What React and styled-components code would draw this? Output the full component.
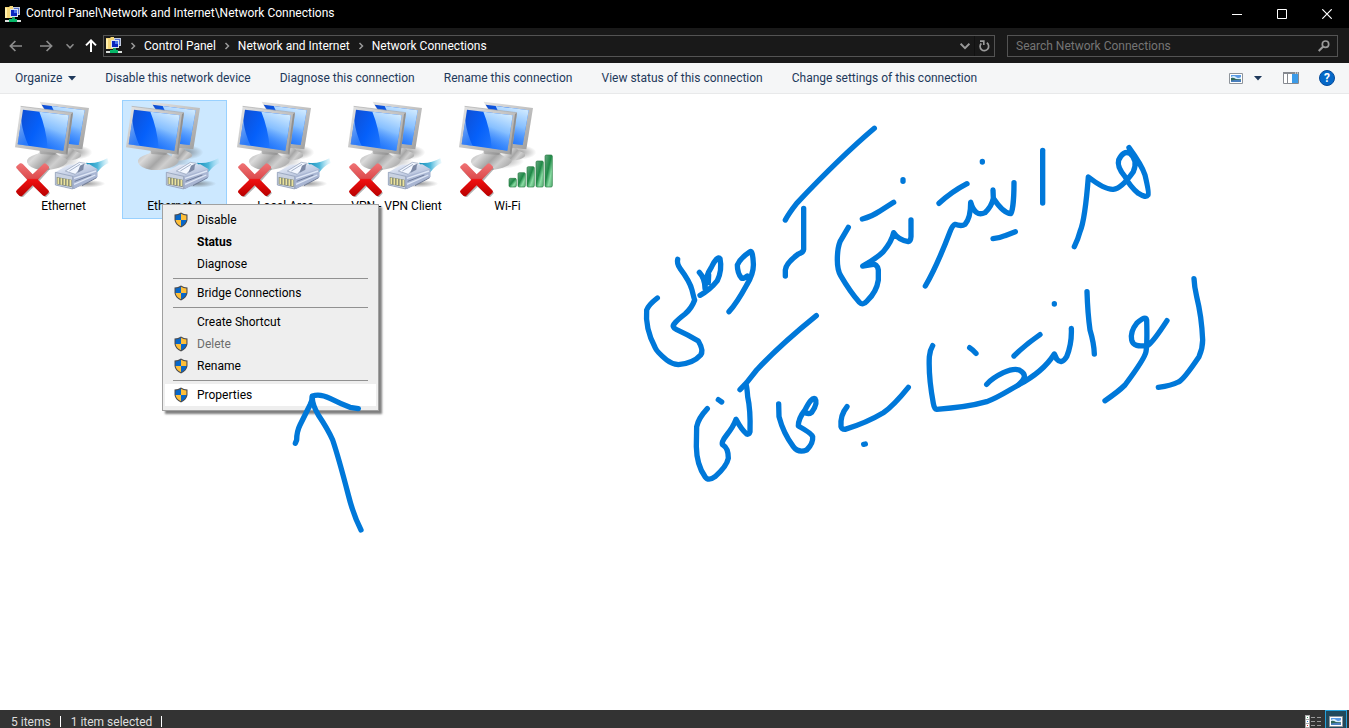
import React from 'react';
import styled, { createGlobalStyle } from 'styled-components';

const Global = createGlobalStyle`
  *, *::before, *::after { box-sizing: border-box; }
  body { margin: 0; background: #fff; overflow: hidden; }
  button, input { font: inherit; color: inherit; }
  button { border: 0; padding: 0; background: none; }
  a { color: inherit; text-decoration: none; }
  svg { display: block; flex: none; }
`;

const Window = styled.div`
  position: relative;
  display: flex;
  flex-direction: column;
  height: 100vh;
  overflow: hidden;
  font-family: Roboto, "Open Sans", sans-serif;
  font-size: 12px;
  line-height: 16px;
  color: #000;
`;

const TitleBar = styled.header`
  display: flex;
  align-items: center;
  height: 28px;
  flex: none;
  padding-left: 5px;
  background: #000;
  color: #fff;
`;
const Title = styled.h1`
  flex: 1;
  margin: 0 0 2px 5px;
  font-size: 12px;
  font-weight: 400;
  white-space: nowrap;
`;
const CaptionButton = styled.button`
  display: grid;
  place-items: center;
  width: 45px;
  height: 24px;
`;

const NavBar = styled.nav`
  display: flex;
  align-items: center;
  height: 35px;
  flex: none;
  padding: 0 11px 0 1px;
  background: #191919;
  color: #fff;
`;
const NavButton = styled.button`
  display: grid;
  place-items: center;
  width: ${(p) => p.$width}px;
  height: 22px;
  color: ${(p) => (p.$active ? '#fff' : '#8c8c8c')};
`;
const AddressBar = styled.div`
  display: flex;
  align-items: center;
  flex: 1;
  height: 22px;
  margin-right: 12px;
  padding-left: 2px;
  border: 1px solid #535353;
`;
const Crumbs = styled.div`
  display: flex;
  align-items: center;
  flex: 1;
  white-space: nowrap;
`;
const CrumbArrow = styled.span`
  display: grid;
  place-items: center;
  width: 22px;
  color: #9a9a9a;
`;
const AddressButton = styled.button`
  display: grid;
  place-items: center;
  width: 20px;
  height: 20px;
  color: #9a9a9a;
  border-left: 1px solid ${(p) => (p.$divided ? '#111' : 'transparent')};
`;
const SearchBox = styled.label`
  display: flex;
  align-items: center;
  width: 331px;
  height: 22px;
  padding: 0 7px 0 8px;
  border: 1px solid #535353;
  color: #9a9a9a;
`;
const SearchInput = styled.input`
  flex: 1;
  min-width: 0;
  padding: 0;
  border: 0;
  outline: 0;
  background: transparent;
  &::placeholder { color: #757575; opacity: 1; }
`;

const Toolbar = styled.div`
  display: flex;
  align-items: center;
  gap: 29px;
  height: 31px;
  flex: none;
  padding: 0 14px 0 15px;
  background: #f5f6f7;
  border-bottom: 1px solid #e8e9ea;
  color: #1e395b;
`;
const Command = styled.button`
  display: flex;
  align-items: center;
  gap: 6px;
  white-space: nowrap;
`;
const ViewTools = styled.div`
  display: flex;
  align-items: center;
  gap: 20px;
  margin-left: auto;
`;
const ViewPicker = styled(Command)`
  gap: 11px;
  padding-right: 1px;
`;

const Content = styled.main`
  flex: 1;
  min-height: 0;
  background: #fff;
`;
const Connections = styled.ul`
  display: flex;
  flex-wrap: wrap;
  gap: 6px;
  margin: 0;
  padding: 6px 11px;
  list-style: none;
`;
const Tile = styled.button`
  display: flex;
  flex-direction: column;
  align-items: center;
  width: 105px;
  height: 119px;
  background: ${(p) => (p.$selected ? '#cce8ff' : 'transparent')};
  outline: ${(p) => (p.$selected ? '1px solid #99d1ff' : 'none')};
  outline-offset: -1px;
  line-height: 18px;
  white-space: nowrap;
`;

const Menu = styled.div`
  position: absolute;
  left: 162px;
  top: 204px;
  width: 217px;
  padding: 4px 2px;
  background: #eee;
  border: 1px solid #a0a0a0;
  box-shadow: 3px 3px 2px rgba(0, 0, 0, 0.5);
`;
const MenuItem = styled.button`
  display: flex;
  align-items: center;
  gap: 9px;
  width: 100%;
  height: 22px;
  padding-left: 9px;
  background: ${(p) => (p.$hot ? '#fff' : 'transparent')};
  font-weight: ${(p) => (p.$strong ? 700 : 400)};
  color: #000;
  &:disabled { color: #6d6d6d; }
`;
const IconSlot = styled.span`
  width: 14px;
`;
const Separator = styled.hr`
  height: 1px;
  margin: 3px 8px;
  border: 0;
  background: #919191;
`;

const StatusBar = styled.footer`
  display: flex;
  align-items: flex-start;
  height: 18px;
  flex: none;
  padding-left: 11px;
  overflow: hidden;
  background: #333;
  color: #dedede;
  line-height: 24px;
`;
const StatusText = styled.span`
  padding-right: 10px;
  margin-right: 10px;
  background: linear-gradient(#fff, #fff) right 6px / 1px 11px no-repeat;
`;
const LayoutButton = styled.button`
  display: grid;
  place-items: center;
  width: 22px;
  height: 22px;
  border: ${(p) => (p.$on ? '1px solid #26a0da' : '0')};
  background: ${(p) => (p.$on ? '#21495c' : 'transparent')};
`;
const LayoutButtons = styled.div`
  display: flex;
  gap: 1px;
  margin-left: auto;
  padding-right: 2px;
`;

const Ink = styled.svg`
  position: absolute;
  left: 0;
  top: 0;
  pointer-events: none;
  fill: none;
  stroke: #0078d9;
  stroke-linecap: round;
  stroke-linejoin: round;
`;

const NetworkFolder = () => (
  <svg width="16" height="17" viewBox="0 0 16 17" aria-hidden="true">
    <path d="M0 1h4l1-1h3v12H0z" fill="#f5d779" />
    <path d="M0 2h2v10H0z" fill="#fff0ad" />
    <path d="M8 1h7v8H8z" fill="#c3cce0" />
    <path d="M9 2h5v6H9z" fill="#5974d2" />
    <path d="M5 3h8v8H5z" fill="#dce3ef" />
    <path d="M6 4h6v6H6z" fill="#0924bd" />
    <path d="M9 4h3v3H9z" fill="#4b76ef" />
    <path d="M7 11h3v2H7z" fill="#1a9d60" />
    <path d="M0 14h16v2H0z" fill="#d9dedb" />
    <path d="M4 13h8v3H4z" fill="#06b668" />
  </svg>
);

const Chevron = ({ down, size = 8 }) => (
  <svg width={size} height={size} viewBox="0 0 8 8" fill="none" stroke="currentColor" strokeWidth="1.5" aria-hidden="true">
    <path d={down ? 'M.5 2.2 4 5.8 7.5 2.2' : 'M2.5 1 5.5 4 2.5 7'} />
  </svg>
);

const Arrow = ({ turn = 0, heavy }) => (
  <svg width="14" height="14" viewBox="0 0 14 14" fill="none" stroke="currentColor" strokeWidth={heavy ? 2 : 1.7} aria-hidden="true">
    <path d="M13 7H1.6M6.4 2 1.4 7l5 5" transform={`rotate(${turn} 7 7)`} />
  </svg>
);

const Triangle = () => (
  <svg width="8" height="5" viewBox="0 0 8 5" aria-hidden="true">
    <path d="M0 0h8L4 4.5z" fill="#1e395b" />
  </svg>
);

const Picture = () => (
  <svg width="14" height="11" viewBox="0 0 14 11" aria-hidden="true">
    <path d="M.5.5h13v10H.5z" fill="#fff" stroke="#8e949b" />
    <path d="M2 2h10v4H2z" fill="#5b9be5" />
    <path d="M2 4q3-2 5 0t5 0v2H2z" fill="#d9eefc" />
    <path d="M2 5q2-1 5 1l5 .3V9H2z" fill="#2f6658" />
    <path d="M2 7.5q5-1 10-.5v2H2z" fill="#4a7fbd" />
  </svg>
);

const PaneIcon = () => (
  <svg width="16" height="12" viewBox="0 0 16 12" aria-hidden="true">
    <path d="M.5.5h15v11H.5z" fill="#fff" stroke="#868a90" />
    <path d="M0 0h16v2H0zM4 2h1v9H4z" fill="#868a90" />
    <path d="M9 2h6v9H9z" fill="#3c9be8" />
    <path d="M12 1h1M14 1h1" stroke="#fff" strokeWidth="1" />
  </svg>
);

const HelpBadge = styled.span`
  display: grid;
  place-items: center;
  width: 16px;
  height: 16px;
  border-radius: 50%;
  border: 1px solid #064b9a;
  background: #0568c8;
  color: #fff;
  font-size: 12px;
  line-height: 14px;
  font-weight: 700;
`;

const Shield = () => (
  <svg width="14" height="16" viewBox="0 0 14 16" aria-hidden="true">
    <path d="M7 .4Q9.800 2.300 13.500 2.500V8Q13 12.500 7 15.600 1 12.500.5 8V2.500Q4.200 2.300 7 .4z" fill="#4c4d50" />
    <path d="M7 1.800V8H1.600V3.500Q4.500 3.200 7 1.800z" fill="#0867c9" />
    <path d="M7 1.800V8h5.400V3.500Q9.500 3.200 7 1.800z" fill="#ffbf38" />
    <path d="M1.600 8H7v6.300Q2 11.800 1.600 8z" fill="#ffbf38" />
    <path d="M12.400 8H7v6.300Q12 11.800 12.400 8z" fill="#0867c9" />
  </svg>
);

const IconPaints = () => (
  <svg width="0" height="0" style={{ position: 'absolute' }} aria-hidden="true">
    <defs>
      <linearGradient id="screen" x1="0" y1="0.2" x2="1" y2="0.6">
        <stop offset="0" stopColor="#0f4fd4" />
        <stop offset="0.4" stopColor="#0560fa" />
        <stop offset="1" stopColor="#2f83ff" />
      </linearGradient>
      <linearGradient id="glare" x1="0.6" y1="0" x2="0.3" y2="1">
        <stop offset="0" stopColor="#d0eaff" />
        <stop offset="0.45" stopColor="#86bfff" />
        <stop offset="1" stopColor="#1a70fa" stopOpacity="0.4" />
      </linearGradient>
      <linearGradient id="corner" x1="0" y1="0" x2="0.4" y2="1">
        <stop offset="0" stopColor="#a9d0ff" stopOpacity="0.8" />
        <stop offset="1" stopColor="#4e97ff" stopOpacity="0.5" />
      </linearGradient>
      <linearGradient id="frame" x1="0" y1="0" x2="1" y2="1">
        <stop offset="0" stopColor="#e4e4e4" />
        <stop offset="0.5" stopColor="#c3c3c3" />
        <stop offset="1" stopColor="#9c9c9c" />
      </linearGradient>
      <linearGradient id="stand" x1="0" y1="0" x2="1" y2="0.5">
        <stop offset="0" stopColor="#b0b0b0" />
        <stop offset="0.3" stopColor="#dadada" />
        <stop offset="0.6" stopColor="#a6a6a6" />
        <stop offset="0.8" stopColor="#cfcfcf" />
        <stop offset="1" stopColor="#b4b4b4" />
      </linearGradient>
      <radialGradient id="shade">
        <stop offset="0" stopColor="#555" stopOpacity="0.6" />
        <stop offset="1" stopColor="#555" stopOpacity="0" />
      </radialGradient>
      <linearGradient id="cross" x1="0" y1="0" x2="0" y2="1">
        <stop offset="0" stopColor="#ef7476" />
        <stop offset="0.46" stopColor="#dd4b4d" />
        <stop offset="0.5" stopColor="#f01010" />
        <stop offset="1" stopColor="#b90000" />
      </linearGradient>
      <linearGradient id="plug" x1="0" y1="0" x2="0.5" y2="1">
        <stop offset="0" stopColor="#eef3fd" />
        <stop offset="0.5" stopColor="#c0cbe2" />
        <stop offset="1" stopColor="#8a97b4" />
      </linearGradient>
      <linearGradient id="cord" x1="0" y1="0" x2="1" y2="0">
        <stop offset="0" stopColor="#158cb8" />
        <stop offset="0.5" stopColor="#4bb6d9" />
        <stop offset="1" stopColor="#a5e2f5" stopOpacity="0.2" />
      </linearGradient>
      <linearGradient id="bar" x1="0" y1="0" x2="1" y2="1">
        <stop offset="0" stopColor="#66a781" />
        <stop offset="0.45" stopColor="#1f8947" />
        <stop offset="0.7" stopColor="#8bdca4" />
        <stop offset="1" stopColor="#55ad72" />
      </linearGradient>
    </defs>
  </svg>
);

const BARS = [[195, 250], [222, 233], [249, 215], [276, 198], [303, 180]];

const ConnectionIcon = ({ off, wireless }) => (
  <svg width="105" height="97" viewBox="33 15 315 291" aria-hidden="true">
    <ellipse cx="225" cy="172" rx="52" ry="22" fill="url(#shade)" />
    <ellipse cx="165" cy="198" rx="75" ry="24" fill="url(#shade)" />
    <path d="M190 160 216 158Q220 166 238 173 250 182 236 189 216 200 178 196z" fill="url(#stand)" />
    <path d="M119 20 267 39 247 163 195 158z" fill="url(#frame)" />
    <path d="M125 29 254 46 236 150 200 146z" fill="url(#screen)" />
    <path d="M155 33 254 46 236 150 207 146z" fill="url(#glare)" />
    <path d="M119 165 168 171Q166 180 196 190 213 199 190 212 160 227 121 225 86 219 81 202 78 187 108 178 120 175 119 165z" fill="url(#stand)" />
    <path d="M119 165 168 171 166 180 121 177z" fill="#818181" opacity=".45" />
    <path d="M62 34 219 53 202 179 45 157z" fill="url(#frame)" />
    <path d="M62 34 219 53" stroke="#aaa" strokeWidth="2" />
    <path d="M219 53 202 179 197 174 213 57z" fill="#909090" />
    <path d="M69 44 206 61 190 167 53 148z" fill="url(#screen)" />
    <path d="M118 50 206 61 190 167 143 160Q139 101 118 50z" fill="url(#glare)" />
    <path d="M64 76Q68 115 86 153L53 148z" fill="url(#corner)" />
    {wireless ? (
      BARS.map(([x, y]) => (
        <rect key={x} x={x} y={y} width="22" height={276 - y} rx="4" fill="url(#bar)" stroke="#277b43" strokeWidth="2" />
      ))
    ) : (
      <g>
        <ellipse cx="258" cy="266" rx="58" ry="12" fill="url(#shade)" />
        <path d="M258 203Q290 208 322 190L326 204Q304 214 292 232L270 226z" fill="url(#cord)" />
        <path d="M166 232 205 209 268 208 292 222V246L222 282 166 270z" fill="url(#plug)" />
        <path d="M218 244 292 222V246L220 282z" fill="#a9b6d3" />
        <path d="M222 250 288 228M222 268 286 240" fill="none" stroke="#dfe7f6" strokeWidth="4" />
        <path d="M224 259 274 240M246 272 290 248" fill="none" stroke="#6f7d9b" strokeWidth="3" />
        <path d="M166 232 218 244V282L166 270z" fill="#c9d2e2" />
        <path d="M170 246 215 254V276L170 268z" fill="#7c8376" />
        <path d="M175 248v19M184 250v19M193 251v19M202 253v19M211 254v19" stroke="#ebe39c" strokeWidth="5" />
        <path d="M196 228 238 202 256 205 226 238z" fill="#f3f7ff" stroke="#8d9bb5" strokeWidth="2" />
        <path d="M208 228 240 208" stroke="#a5b2c9" strokeWidth="3" />
        <path d="M240 212 252 206 250 224 232 234z" fill="#7d8aa6" />
        <path d="M166 232 218 244V282L166 270z" fill="none" stroke="#8795b1" strokeWidth="2" />
      </g>
    )}
    {off && (
      <g>
        <path d="M51 221 65 207 98 240 134 206 147 219 115 255 147 291 134 305 98 272 64 305 49 293 82 256z" fill="#444" opacity=".4" transform="translate(3 3)" />
        <path d="M49 219Q47 215 51 212L60 205Q65 203 69 208L98 238 130 207Q134 203 138 206L146 214Q149 218 145 222L114 254 145 286Q149 290 145 294L136 302Q132 305 128 301L98 271 67 302Q63 305 58 302L50 294Q46 290 50 286L82 254z" fill="url(#cross)" />
      </g>
    )}
  </svg>
);

const CONNECTIONS = [
  { name: 'Ethernet', off: true },
  { name: 'Ethernet 2', selected: true },
  { name: 'Local Area', off: true },
  { name: 'VPN - VPN Client', off: true },
  { name: 'Wi-Fi', off: true, wireless: true },
];

const COMMANDS = [
  'Disable this network device',
  'Diagnose this connection',
  'Rename this connection',
  'View status of this connection',
  'Change settings of this connection',
];

const MENU = [
  { label: 'Disable', shield: true },
  { label: 'Status', strong: true },
  { label: 'Diagnose' },
  null,
  { label: 'Bridge Connections', shield: true },
  null,
  { label: 'Create Shortcut' },
  { label: 'Delete', shield: true, disabled: true },
  { label: 'Rename', shield: true },
  null,
  { label: 'Properties', shield: true, hot: true },
];

// Pen strokes, grouped by the part of the page they were drawn on; three units to a pixel.
const STROKES = [
  {
    x: 630, y: 110, width: 16,
    d: [
      'M733 55C650 125 590 185 500 280Q475 312 466 330',
      'M521 295V418Q520 427 505 432 467 460 466 480V498',
      'M819 209V214',
      'M697 327Q725 320 750 303L791 277',
      'M655 352 630 395Q622 415 622 450 622 480 632 497 660 545 688 577 698 588 712 572 740 545 745 510V480Q742 460 725 464L698 468Q740 445 760 425 785 395 791 368 805 390 835 395 842 394 843 380V330',
      'M143 448Q140 460 150 475 180 515 186 540 192 565 194 570 185 595 165 612 125 643 130 650 132 655 140 659 175 675 205 693 222 722 212 735 190 760 145 764 125 762 110 750 80 725 75 712 45 655 50 600 55 585 82 564',
      'M208 487Q225 505 225 535 225 500 245 470C255 450 265 438 270 446 275 470 270 495 262 512Q240 540 210 556M236 495 235 518',
      'M297 605Q320 580 350 525 372 490 370 460 368 420 360 425 330 445 322 465 322 490 335 505 345 505 352 498',
    ],
  },
  {
    x: 900, y: 110, width: 16,
    d: [
      'M687 113Q725 165 735 195 748 250 744 255 738 265 715 250 690 230 675 200 650 170 656 150 670 120 690 130 715 150 700 185 665 235 640 238 615 240 565 201 555 330 540 365 535 385 523 410',
      'M428 121V279',
      'M247 154V156',
      'M117 280Q155 245 201 221',
      'M342 218C342 270 337 308 332 311Q310 310 280 265L279 240M280 265Q275 290 255 308 225 322 212 277 212 325 195 343 185 350 165 343 158 345 150 365 110 470 76 528',
      'M279 386Q300 384 315 377L346 365',
      'M882 506Q883 530 890 560 905 620 908 690 908 715 897 740 850 810 835 816 815 827 775 832',
      'M801 632Q760 695 745 705 700 715 695 690 690 665 710 640 738 615 740 630 742 700 738 725 735 745 675 825 655 845 615 872',
      'M561 545Q563 610 570 660 582 700 583 732',
      'M463 581V582',
      'M342 738Q375 705 420 674',
      'M514 655Q516 700 500 740 485 765 470 747L463 732Q430 785 355 825 385 800 365 785 350 770 310 788 275 805 260 823',
      'M355 825C320 845 290 865 260 875Q200 892 110 898 103 898 100 880 85 800 88 740 90 720 98 707',
      'M209 713Q220 720 228 730',
    ],
  },
  {
    x: 680, y: 300, width: 16,
    d: [
      'M409 47Q300 135 230 210L200 248 180 269',
      'M197 255Q200 250 203 290 212 330 210 395 207 405 200 402 185 390 168 358 160 380 140 405 120 430 130 436 145 445 145 475 140 500 105 530 85 545 75 530 50 495 49 440L50 380Q55 355 82 326',
      'M115 299 125 306',
      'M296 312 297 350Q310 400 340 440 355 460 380 450 400 430 398 410 395 400 355 378 355 355 375 330 395 290 405 296 415 310 395 337 385 345 372 336',
      'M501 320Q480 345 483 380 485 388 495 388 560 368 610 338 640 318 685 262',
      'M551 433 556 432',
    ],
  },
  {
    x: 280, y: 380, width: 16,
    d: [
      'M46 190 50 180Q50 155 60 135L90 75Q97 60 97 50',
      'M243 450Q220 405 205 345 175 230 158 180 145 150 115 105 95 70 97 48 120 40 150 55 180 70 210 82L235 86',
    ],
  },
];

export default function App() {
  return (
    <Window>
      <Global />
      <IconPaints />
      <TitleBar>
        <NetworkFolder />
        <Title>Control Panel\Network and Internet\Network Connections</Title>
        <CaptionButton aria-label="Minimize">
          <svg width="10" height="10"><path d="M0 5h10v1H0z" fill="#fff" /></svg>
        </CaptionButton>
        <CaptionButton aria-label="Maximize">
          <svg width="10" height="10"><path d="M.5.5h9v9h-9z" fill="none" stroke="#fff" /></svg>
        </CaptionButton>
        <CaptionButton aria-label="Close">
          <svg width="10" height="10"><path d="M.3.3l9.400 9.400M9.700.3.3 9.700" stroke="#fff" strokeWidth="1.200" /></svg>
        </CaptionButton>
      </TitleBar>

      <NavBar aria-label="Location">
        <NavButton $width={30} aria-label="Back"><Arrow /></NavButton>
        <NavButton $width={30} aria-label="Forward"><Arrow turn={180} /></NavButton>
        <NavButton $width={17} aria-label="Recent locations"><Chevron down /></NavButton>
        <NavButton $width={25} $active aria-label="Up"><Arrow turn={90} heavy /></NavButton>
        <AddressBar>
          <NetworkFolder />
          <Crumbs>
            {['Control Panel', 'Network and Internet', 'Network Connections'].map((name) => (
              <React.Fragment key={name}>
                <CrumbArrow><Chevron /></CrumbArrow>
                <a href="#">{name}</a>
              </React.Fragment>
            ))}
          </Crumbs>
          <AddressButton aria-label="Previous locations"><Chevron down size={10} /></AddressButton>
          <AddressButton $divided aria-label="Refresh">
            <svg width="11" height="12" viewBox="0 0 11 12" fill="none" stroke="currentColor" strokeWidth="1.700">
              <path d="M7.800 2.800A4.300 4.300 0 1 1 2.300 3.300M1 1.200h3.800V5" />
            </svg>
          </AddressButton>
        </AddressBar>
        <SearchBox>
          <SearchInput type="text" aria-label="Search Network Connections" placeholder="Search Network Connections" />
          <svg width="12" height="12" viewBox="0 0 12 12" fill="none" stroke="currentColor" strokeWidth="1.700" aria-hidden="true">
            <circle cx="7.500" cy="4.200" r="3.200" />
            <path d="M5.200 6.500.7 11" strokeWidth="2" />
          </svg>
        </SearchBox>
      </NavBar>

      <Toolbar role="toolbar">
        <Command>Organize <Triangle /></Command>
        {COMMANDS.map((label) => <Command key={label}>{label}</Command>)}
        <ViewTools>
          <ViewPicker aria-label="Change your view"><Picture /><Triangle /></ViewPicker>
          <Command aria-label="Preview pane"><PaneIcon /></Command>
          <Command aria-label="Help"><HelpBadge>?</HelpBadge></Command>
        </ViewTools>
      </Toolbar>

      <Content>
        <Connections>
          {CONNECTIONS.map(({ name, selected, off, wireless }) => (
            <li key={name}>
              <Tile $selected={selected}>
                <ConnectionIcon off={off} wireless={wireless} />
                {name}
              </Tile>
            </li>
          ))}
        </Connections>
      </Content>

      <StatusBar>
        <StatusText>5 items</StatusText>
        <StatusText>1 item selected</StatusText>
        <LayoutButtons>
          <LayoutButton aria-label="Details">
            <svg width="16" height="13" viewBox="0 0 16 13">
              <path d="M0 0h5v13H0z" fill="#aaa" />
              <path d="M1 1h3v3H1zM1 5h3v3H1zM1 9h3v3H1z" fill="#fff" />
              <path d="M2 2h1v1H2z" fill="#2a8d52" />
              <path d="M2 6h1v1H2z" fill="#2877d4" />
              <path d="M2 10h1v1H2z" fill="#c52a2a" />
              <path d="M6 2h4v1H6zM12 2h4v1h-4zM6 6h4v1H6zM12 6h4v1h-4zM6 10h4v1H6zM12 10h4v1h-4z" fill="#999" />
            </svg>
          </LayoutButton>
          <LayoutButton $on aria-label="Large icons"><Picture /></LayoutButton>
        </LayoutButtons>
      </StatusBar>

      <Menu role="menu">
        {MENU.map((item, i) =>
          item ? (
            <MenuItem key={item.label} role="menuitem" $strong={item.strong} $hot={item.hot} disabled={item.disabled}>
              <IconSlot>{item.shield && <Shield />}</IconSlot>
              {item.label}
            </MenuItem>
          ) : (
            <Separator key={i} />
          )
        )}
      </Menu>

      <Ink width="1349" height="728" role="img" aria-label="هر اینترنتی که وصلی رو انتخاب می کنی">
        {STROKES.map(({ x, y, width, d }) => (
          <g key={x} transform={`translate(${x} ${y}) scale(${1 / 3})`} strokeWidth={width}>
            {d.map((path) => <path key={path} d={path} />)}
          </g>
        ))}
      </Ink>
    </Window>
  );
}
